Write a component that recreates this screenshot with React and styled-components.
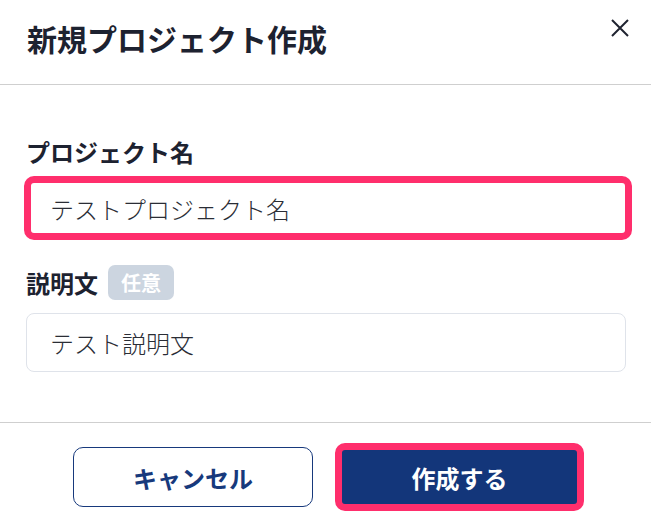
import React from 'react';
import styled, { createGlobalStyle } from 'styled-components';

const GlobalStyle = createGlobalStyle`
  body {
    margin: 0;
    background: #ffffff;
    font-family: "Noto Sans CJK JP", "Noto Sans", sans-serif;
    color: #1d2230;
  }
`;

const Modal = styled.div`
  width: 651px;
  height: 522px;
  display: flex;
  flex-direction: column;
  background: #ffffff;
`;

const Header = styled.header`
  height: 85px;
  box-sizing: border-box;
  display: flex;
  justify-content: space-between;
  align-items: flex-start;
  padding: 18px 22px 0 27px;
  border-bottom: 1px solid #cfcfcf;
`;

const Title = styled.h1`
  margin: 0;
  font-size: 30px;
  line-height: 40px;
  font-weight: 700;
  color: #1d2230;
`;

const CloseButton = styled.button`
  width: 18px;
  height: 18px;
  margin-top: 1px;
  padding: 0;
  border: none;
  background: none;
  cursor: pointer;
  color: #1f2330;

  svg {
    display: block;
  }
`;

const Body = styled.div`
  flex: 1;
  display: flex;
  flex-direction: column;
  padding: 51px 25px 0 26px;
`;

const LabelRow = styled.div`
  display: flex;
  align-items: center;
  gap: 10px;
  margin-top: ${({ $top }) => $top || 0}px;
  margin-bottom: ${({ $bottom }) => $bottom || 8}px;
`;

const Label = styled.label`
  font-size: 24px;
  line-height: 32px;
  font-weight: 700;
  color: #1d2230;
`;

const Badge = styled.span`
  height: 35px;
  box-sizing: border-box;
  padding: 0 13px;
  display: inline-flex;
  align-items: center;
  border-radius: 7px;
  background: #ccd5e0;
  color: #ffffff;
  font-size: 20px;
  font-weight: 700;
`;

const Input = styled.input`
  box-sizing: border-box;
  width: ${({ $highlight }) => ($highlight ? '608px' : '600px')};
  height: ${({ $highlight }) => ($highlight ? '64px' : '59px')};
  margin-left: ${({ $highlight }) => ($highlight ? '-2px' : '0')};
  padding: 0 0 0 ${({ $highlight }) => ($highlight ? '19px' : '23px')};
  border: ${({ $highlight }) => ($highlight ? '7px solid #ff2e6c' : '1px solid #dfe3ea')};
  border-radius: ${({ $highlight }) => ($highlight ? '10px' : '8px')};
  background: #ffffff;
  font-family: "Noto Sans CJK JP", "Noto Sans", sans-serif;
  font-size: 24px;
  font-weight: 300;
  color: #2a2d35;
  outline: none;
`;

const Footer = styled.footer`
  height: 100px;
  box-sizing: border-box;
  border-top: 1px solid #cfcfcf;
  display: flex;
  justify-content: center;
  align-items: center;
  gap: 22px;
  padding: 9px 0 0 6px;
`;

const Button = styled.button`
  box-sizing: border-box;
  font-family: "Noto Sans CJK JP", "Noto Sans", sans-serif;
  font-size: 24px;
  font-weight: 700;
  cursor: pointer;
  width: ${({ $primary }) => ($primary ? '249px' : '240px')};
  height: ${({ $primary }) => ($primary ? '68px' : '60px')};
  border-radius: 10px;
  border: ${({ $primary }) => ($primary ? '7px solid #ff2e6c' : '1.5px solid #17397c')};
  background: ${({ $primary }) => ($primary ? '#13367a' : '#ffffff')};
  color: ${({ $primary }) => ($primary ? '#ffffff' : '#17397c')};
`;

const App = () => {
  return (
    <>
      <GlobalStyle />
      <Modal>
        <Header>
          <Title>新規プロジェクト作成</Title>
          <CloseButton aria-label="閉じる">
            <svg width="18" height="18" viewBox="0 0 18 18">
              <path d="M1 1 L17 17 M17 1 L1 17" stroke="currentColor" strokeWidth="2" />
            </svg>
          </CloseButton>
        </Header>
        <Body>
          <LabelRow>
            <Label htmlFor="project-name">プロジェクト名</Label>
          </LabelRow>
          <Input id="project-name" $highlight defaultValue="テストプロジェクト名" />
          <LabelRow $top={25} $bottom={13}>
            <Label htmlFor="project-desc">説明文</Label>
            <Badge>任意</Badge>
          </LabelRow>
          <Input id="project-desc" defaultValue="テスト説明文" />
        </Body>
        <Footer>
          <Button>キャンセル</Button>
          <Button $primary>作成する</Button>
        </Footer>
      </Modal>
    </>
  );
};

export default App;
